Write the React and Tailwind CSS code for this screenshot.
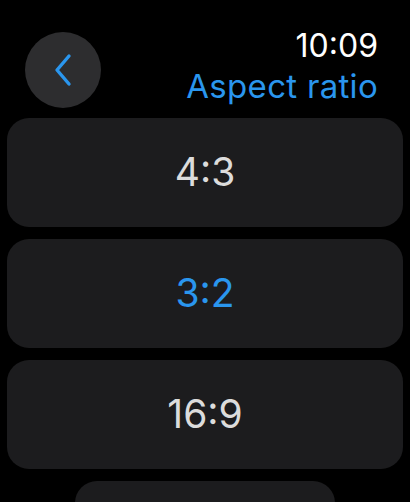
import React from 'react';

const ratios = [
    { label: '4:3', selected: false },
    { label: '3:2', selected: true },
    { label: '16:9', selected: false },
];

const App = () => {
    return (
        <div className="w-[410px] h-[502px] bg-black overflow-hidden font-['Inter',sans-serif] flex flex-col">
            {/* Header */}
            <div className="flex items-start justify-between pl-[25px] pr-[32px] pt-[32px] h-[118px] shrink-0">
                <button className="w-[76px] h-[76px] rounded-full bg-[#2d2d2f] flex items-center justify-center">
                    <svg width="22" height="36" viewBox="0 0 22 36" fill="none">
                        <path d="M17 4 L5 18 L17 32" stroke="#2a96ee" strokeWidth="3.4" strokeLinecap="round" strokeLinejoin="round" />
                    </svg>
                </button>
                <div className="flex flex-col items-end -mt-[4px]">
                    <span className="text-[32px] leading-[36px] text-white">10:09</span>
                    <span className="text-[33px] leading-[36px] text-[#2a96ee] tracking-[0.3px] mt-[4px]">Aspect ratio</span>
                </div>
            </div>

            {/* Options */}
            <div className="flex flex-col items-center gap-[12px] px-[7px] shrink-0">
                {ratios.map((r) => (
                    <div
                        key={r.label}
                        className="w-full h-[109px] rounded-[22px] bg-[#1c1c1e] flex items-center justify-center shrink-0"
                    >
                        <span className={`text-[39px] ${r.selected ? 'text-[#2a96ee]' : 'text-[#dcdcdc]'}`}>
                            {r.label}
                        </span>
                    </div>
                ))}
                <div className="w-[260px] h-[60px] rounded-[22px] bg-[#1c1c1e] shrink-0" />
            </div>
        </div>
    );
};

export default App;
